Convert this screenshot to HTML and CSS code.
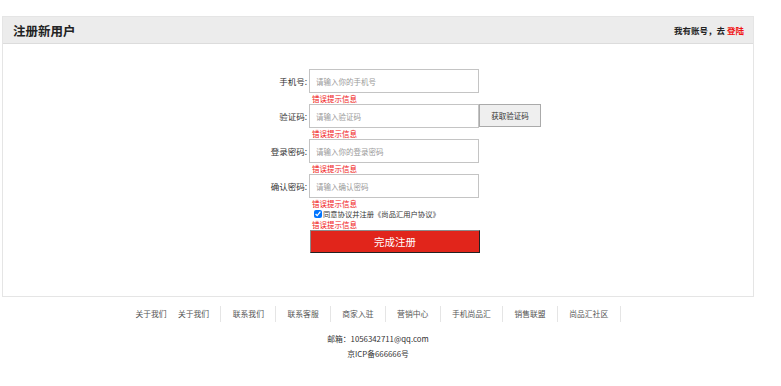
FILE: index.html
```html
<!DOCTYPE html>
<html lang="zh">
<head>
  <meta charset="UTF-8" />
  <meta name="viewport" content="width=device-width, initial-scale=1.0"/>
  <title>注册新用户</title>
  <link rel="stylesheet" href="styles.css">
</head>
<body>
  <div class="register">
    <div class="register-head">
      <h3>注册新用户</h3>
      <span class="go">我有账号，去 <a href="#">登陆</a></span>
    </div>

    <form class="reg-form">
      <label>手机号:</label>
      <div class="field"><input type="text" placeholder="请输入你的手机号"></div>
      <span></span><div class="tip">错误提示信息</div>

      <label>验证码:</label>
      <div class="field"><input type="text" placeholder="请输入验证码"><button type="button" class="code-btn">获取验证码</button></div>
      <span></span><div class="tip">错误提示信息</div>

      <label>登录密码:</label>
      <div class="field"><input type="password" placeholder="请输入你的登录密码"></div>
      <span></span><div class="tip">错误提示信息</div>

      <label>确认密码:</label>
      <div class="field"><input type="password" placeholder="请输入确认密码"></div>
      <span></span><div class="tip">错误提示信息</div>

      <span></span>
      <div class="agree"><input type="checkbox" checked><span>同意协议并注册《尚品汇用户协议》</span></div>
      <span></span><div class="tip">错误提示信息</div>

      <span></span>
      <div><button type="button" class="submit">完成注册</button></div>
    </form>
  </div>

  <footer>
    <ul class="links">
      <li class="first">关于我们</li>
      <li>关于我们</li>
      <li>联系我们</li>
      <li>联系客服</li>
      <li>商家入驻</li>
      <li>营销中心</li>
      <li>手机尚品汇</li>
      <li>销售联盟</li>
      <li>尚品汇社区</li>
    </ul>
    <div class="info">邮箱：1056342711@qq.com</div>
    <div class="info">京ICP备666666号</div>
  </footer>
</body>
</html>
```

FILE: styles.css
```css
html, body { margin: 0; padding: 0; font-family: "Noto Sans CJK SC", "Liberation Sans", sans-serif; color: #333; }
.register { width: 752px; margin: 16px 0 0 2px; border: 1px solid #e5e5e5; box-sizing: border-box; padding-bottom: 43px; }
.register-head { height: 26px; background: #ececec; border-bottom: 1px solid #dcdcdc; display: flex; align-items: center; justify-content: space-between; padding: 0 9px 0 10px; }
.register-head h3 { margin: 0; font-size: 12.5px; font-weight: bold; color: #222; }
.go { font-size: 8.5px; font-weight: bold; color: #222; }
.go a { color: #f01414; text-decoration: none; }

.reg-form { display: grid; grid-template-columns: 306px 1fr; padding-top: 25px; }
.reg-form label { font-size: 8.5px; color: #333; text-align: right; padding-right: 2px; line-height: 24px; }
.field { display: flex; height: 24px; }
.field input { width: 170px; height: 24px; box-sizing: border-box; border: 1px solid #c4c4c4; padding: 0 6px; font-size: 7.5px; font-family: inherit; outline: none; }
.field input::placeholder { color: #999; }
.code-btn { width: 62px; height: 23px; box-sizing: border-box; border: 1px solid #aaa; background: #efefef; font-size: 7.5px; font-family: inherit; color: #333; padding: 0; }
.tip { font-size: 7.5px; color: #f01414; line-height: 11px; height: 11px; padding-left: 3px; }
.agree { display: flex; align-items: center; height: 10px; padding-left: 5px; font-size: 7.3px; color: #333; }
.agree input { width: 8px; height: 8px; margin: 0 1px 0 0; }
.submit { display: block; width: 170px; height: 23px; margin-left: 1px; background: #e1251b; color: #fff; font-size: 10.5px; font-family: inherit; border: 1px solid; border-color: #8a8a8a #222 #222 #8a8a8a; padding: 0; }

footer { width: 752px; margin: 9px 0 0 2px; text-align: center; }
.links { list-style: none; margin: 0 0 9px; padding: 0; display: flex; justify-content: center; }
.links li { font-size: 7.8px; color: #555; line-height: 16px; padding: 0 11.3px; border-right: 1px solid #e5e5e5; }
.links li.first { padding: 0; border-right: none; }
.info { font-size: 7.8px; color: #333; line-height: 15px; }
```
